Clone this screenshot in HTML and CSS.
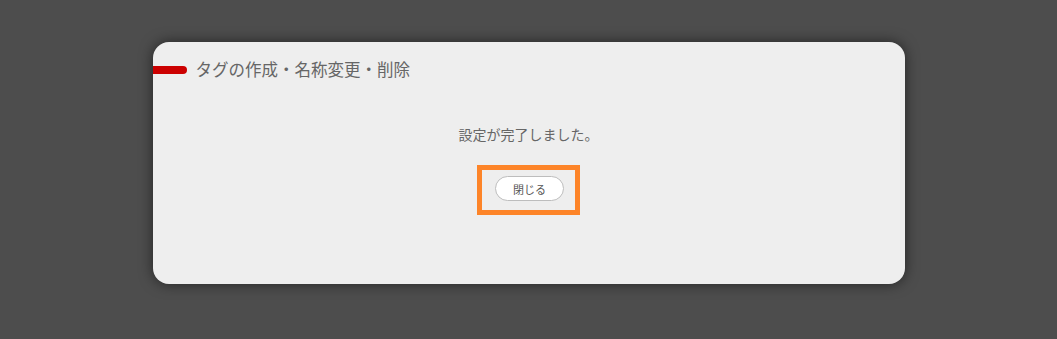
FILE: index.html
```html
<!DOCTYPE html>
<html lang="ja">
<head>
    <meta charset="UTF-8">
    <title>タグの作成・名称変更・削除</title>
    <link rel="stylesheet" href="styles.css">
</head>
<body>
<div class="dialog">
    <div class="dialog-head">
        <span class="head-bar"></span>
        <h1 class="head-title">タグの作成・名称変更・削除</h1>
    </div>
    <p class="message">設定が完了しました。</p>
    <div class="actions">
        <div class="focus-box">
            <button class="btn-close" type="button">閉じる</button>
        </div>
    </div>
</div>
</body>
</html>
```

FILE: styles.css
```css
html, body {
    margin: 0;
    padding: 0;
}
body {
    background-color: #4d4d4d;
    height: 339px;
    padding-top: 42px;
    box-sizing: border-box;
    font-family: "Liberation Sans", "Noto Sans CJK JP", sans-serif;
    overflow: hidden;
}
.dialog {
    width: 752px;
    height: 242px;
    margin: 0 auto;
    background-color: #eeeeee;
    border-radius: 16px;
    box-shadow: 0 0 14px rgba(0, 0, 0, 0.55);
    display: flex;
    flex-direction: column;
    align-items: center;
}
.dialog-head {
    align-self: stretch;
    display: flex;
    align-items: center;
    gap: 9px;
    height: 28px;
    margin-top: 14px;
}
.head-bar {
    width: 34px;
    height: 8px;
    background-color: #cc0000;
    border-radius: 0 4px 4px 0;
}
.head-title {
    margin: 0;
    font-size: 16.5px;
    font-weight: normal;
    color: #666666;
    line-height: 28px;
}
.message {
    margin: 41px 0 0;
    font-size: 14px;
    line-height: 20px;
    color: #666666;
}
.actions {
    margin-top: 20px;
}
.focus-box {
    border: 5px solid #fd8428;
    padding: 6px 11px 9px 13px;
    display: flex;
}
.btn-close {
    width: 69px;
    height: 25px;
    padding: 0;
    background-color: #ffffff;
    border: 1px solid #bdbdbd;
    border-radius: 13px;
    font-family: "Liberation Sans", "Noto Sans CJK JP", sans-serif;
    font-size: 11px;
    color: #555555;
}
```
